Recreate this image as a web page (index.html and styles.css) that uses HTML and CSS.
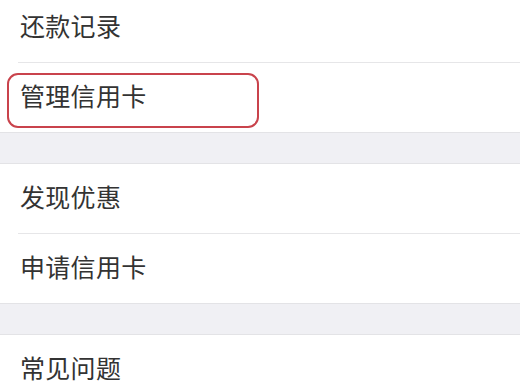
FILE: index.html
```html
<!DOCTYPE html>
<html lang="zh-CN">
<head>
<meta charset="utf-8">
<title>信用卡</title>
<link rel="stylesheet" href="styles.css">
</head>
<body>
<div class="page">
  <div class="group first">
    <div class="row"><span class="label">还款记录</span></div>
    <div class="row highlighted"><span class="label">管理信用卡</span><div class="mark"></div></div>
  </div>
  <div class="gap"></div>
  <div class="group">
    <div class="row"><span class="label">发现优惠</span></div>
    <div class="row"><span class="label">申请信用卡</span></div>
  </div>
  <div class="gap"></div>
  <div class="group">
    <div class="row"><span class="label">常见问题</span></div>
  </div>
</div>
</body>
</html>
```
FILE: styles.css
```css
html, body {
  margin: 0;
  padding: 0;
  background: #ffffff;
  overflow: hidden;
}
.page {
  width: 520px;
  height: 390px;
  overflow: hidden;
  font-family: "Noto Sans CJK SC", "Noto Sans", sans-serif;
  color: #333333;
}
.group {
  display: flex;
  flex-direction: column;
  background: #ffffff;
}
.group.first {
  margin-top: -7px;
}
.row {
  position: relative;
  height: 69px;
  display: flex;
  align-items: center;
  padding-left: 20px;
  box-sizing: border-box;
}
.row + .row::before {
  content: "";
  position: absolute;
  top: -1px;
  left: 18px;
  right: 0;
  height: 1px;
  background: #e6e6e8;
}
.row + .row {
  margin-top: 1px;
}
.label {
  font-size: 25px;
  line-height: 1;
  letter-spacing: 0.3px;
  margin-top: -5px;
}
.gap {
  height: 30px;
  background: #f0f0f4;
  border-top: 1px solid #e3e3e6;
  border-bottom: 1px solid #e3e3e6;
}
.mark {
  position: absolute;
  left: 7px;
  top: 10px;
  width: 252px;
  height: 55px;
  box-sizing: border-box;
  border: 2px solid #c9434c;
  border-radius: 11px;
}
```
